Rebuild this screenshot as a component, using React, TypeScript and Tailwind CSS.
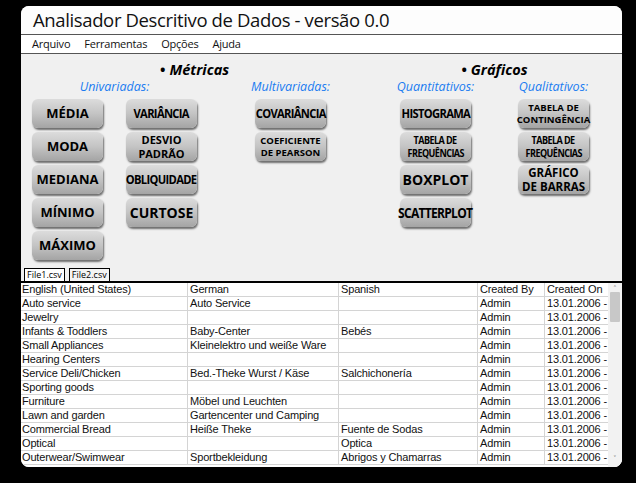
import React from 'react';

type Btn = { label: string[]; size: string; squeeze?: boolean };

const univA: Btn[] = [
  { label: ['MÉDIA'], size: 'text-[13px]' },
  { label: ['MODA'], size: 'text-[13px]' },
  { label: ['MEDIANA'], size: 'text-[13px]' },
  { label: ['MÍNIMO'], size: 'text-[13px]' },
  { label: ['MÁXIMO'], size: 'text-[13px]' },
];

const univB: Btn[] = [
  { label: ['VARIÂNCIA'], size: 'text-[13px]', squeeze: true },
  { label: ['DESVIO', 'PADRÃO'], size: 'text-[11px]' },
  { label: ['OBLIQUIDADE'], size: 'text-[13px]', squeeze: true },
  { label: ['CURTOSE'], size: 'text-[14px]' },
];

const multi: Btn[] = [
  { label: ['COVARIÂNCIA'], size: 'text-[13px]', squeeze: true },
  { label: ['COEFICIENTE', 'DE PEARSON'], size: 'text-[9.5px]' },
];

const quanti: Btn[] = [
  { label: ['HISTOGRAMA'], size: 'text-[13px]', squeeze: true },
  { label: ['TABELA DE', 'FREQUÊNCIAS'], size: 'text-[10.5px]', squeeze: true },
  { label: ['BOXPLOT'], size: 'text-[14px]' },
  { label: ['SCATTERPLOT'], size: 'text-[14px]', squeeze: true },
];

const quali: Btn[] = [
  { label: ['TABELA DE', 'CONTINGÊNCIA'], size: 'text-[9.5px]' },
  { label: ['TABELA DE', 'FREQUÊNCIAS'], size: 'text-[10.5px]', squeeze: true },
  { label: ['GRÁFICO', 'DE BARRAS'], size: 'text-[11.5px]' },
];

const rows = [
  ['Auto service', 'Auto Service', ''],
  ['Jewelry', '', ''],
  ['Infants & Toddlers', 'Baby-Center', 'Bebés'],
  ['Small Appliances', 'Kleinelektro und weiße Ware', ''],
  ['Hearing Centers', '', ''],
  ['Service Deli/Chicken', 'Bed.-Theke Wurst / Käse', 'Salchichonería'],
  ['Sporting goods', '', ''],
  ['Furniture', 'Möbel und Leuchten', ''],
  ['Lawn and garden', 'Gartencenter und Camping', ''],
  ['Commercial Bread', 'Heiße Theke', 'Fuente de Sodas'],
  ['Optical', '', 'Optica'],
  ['Outerwear/Swimwear', 'Sportbekleidung', 'Abrigos y Chamarras'],
];

function MetricButton({ b }: { b: Btn }) {
  return (
    <button className="w-[71px] h-[29px] rounded-[6px] bg-linear-to-b from-[#dcdcdc] via-[#c4c4c4] to-[#a4a4a4] shadow-[1px_2px_2px_rgba(0,0,0,0.55)] flex flex-col items-center justify-center font-['Open_Sans',sans-serif] font-bold text-black">
      {b.label.map((l) => (
        <span
          key={l}
          className={`${b.size} ${b.label.length > 1 ? 'leading-[1.2]' : 'leading-none'} whitespace-nowrap ${b.squeeze ? 'tracking-[-0.06em] scale-x-[0.86]' : ''}`}
        >
          {l}
        </span>
      ))}
    </button>
  );
}

function Column({ items }: { items: Btn[] }) {
  return (
    <div className="flex flex-col gap-[4px]">
      {items.map((b, i) => (
        <MetricButton key={i} b={b} />
      ))}
    </div>
  );
}

function SubLabel({ children }: { children: React.ReactNode }) {
  return (
    <div className="text-center text-[12.5px] italic text-[#1a7cf0] font-['Open_Sans',sans-serif] leading-none h-[17px]">
      {children}
    </div>
  );
}

export default function App() {
  return (
    <div className="w-[636px] h-[483px] bg-black pt-[6px] pl-[21px]">
      <div className="w-[601px] h-[461px] bg-[#f0f0f0] rounded-[8px] overflow-hidden flex flex-col">
        {/* título */}
        <div className="h-[29px] bg-[#fdfdfd] border-b border-[#555] flex items-center pl-[12px]">
          <span className="text-[18.5px] text-[#111] font-['Open_Sans',sans-serif] tracking-[-0.02em] leading-none">
            Analisador Descritivo de Dados - versão 0.0
          </span>
        </div>

        {/* menu */}
        <div className="h-[19px] bg-white border-b border-[#555] flex items-center gap-[14px] pl-[11px] text-[11px] text-[#111] font-['Open_Sans',sans-serif] tracking-[-0.02em]">
          <span>Arquivo</span>
          <span>Ferramentas</span>
          <span>Opções</span>
          <span>Ajuda</span>
        </div>

        {/* métricas e gráficos */}
        <div className="h-[215px] flex pt-[9px] pl-[11px]">
          <div className="flex flex-col">
            <div className="h-[18px] text-[14.5px] font-bold italic text-black font-['Open_Sans',sans-serif] leading-none pl-[128px]">
              <span className="not-italic mr-[4px]">•</span>Métricas
            </div>
            <div className="flex gap-[58px]">
              <div className="flex flex-col">
                <SubLabel>Univariadas:</SubLabel>
                <div className="flex gap-[23px] pt-[1px]">
                  <Column items={univA} />
                  <Column items={univB} />
                </div>
              </div>
              <div className="flex flex-col w-[71px]">
                <div className="-mx-[10px]">
                  <SubLabel>Multivariadas:</SubLabel>
                </div>
                <div className="pt-[1px]">
                  <Column items={multi} />
                </div>
              </div>
            </div>
          </div>

          <div className="flex flex-col ml-[74px]">
            <div className="h-[18px] text-[14.5px] font-bold italic text-black font-['Open_Sans',sans-serif] leading-none text-center">
              <span className="not-italic mr-[4px]">•</span>Gráficos
            </div>
            <div className="flex gap-[47px]">
              <div className="flex flex-col w-[71px]">
                <div className="-mx-[10px]">
                  <SubLabel>Quantitativos:</SubLabel>
                </div>
                <div className="pt-[1px]">
                  <Column items={quanti} />
                </div>
              </div>
              <div className="flex flex-col w-[71px]">
                <div className="-mx-[10px]">
                  <SubLabel>Qualitativos:</SubLabel>
                </div>
                <div className="pt-[1px]">
                  <Column items={quali} />
                </div>
              </div>
            </div>
          </div>
        </div>

        {/* abas */}
        <div className="h-[14px] flex items-end gap-[4px] pl-[3px] border-b-2 border-black">
          <div className="h-[13px] px-[2px] bg-white border border-b-0 border-black text-[9px] leading-[12px] text-black font-['Open_Sans',sans-serif]">
            File1.csv
          </div>
          <div className="h-[13px] px-[2px] bg-[#f4f4f4] border border-b-0 border-black text-[9px] leading-[12px] text-black font-['Open_Sans',sans-serif]">
            File2.csv
          </div>
        </div>

        {/* tabela */}
        <div className="flex-1 flex bg-white min-h-0 overflow-hidden">
          <div className="flex-1 font-['Liberation_Sans',Arial,sans-serif] text-[11px] text-[#111] tracking-[-0.15px]">
            <div className="grid grid-cols-[167px_151px_139px_67px_63px] h-[14px] leading-[13px] border-b border-[#d4d4d4]">
              <div className="pl-[1px] border-r border-[#d4d4d4]">English (United States)</div>
              <div className="pl-[2px] border-r border-[#d4d4d4]">German</div>
              <div className="pl-[2px] border-r border-[#d4d4d4]">Spanish</div>
              <div className="pl-[2px] border-r border-[#d4d4d4]">Created By</div>
              <div className="pl-[2px]">Created On</div>
            </div>
            {rows.map((r, i) => (
              <div
                key={i}
                className="grid grid-cols-[167px_151px_139px_67px_63px] h-[14px] leading-[13px] border-b border-[#d4d4d4]"
              >
                <div className="pl-[1px] border-r border-[#d4d4d4] whitespace-nowrap overflow-hidden">{r[0]}</div>
                <div className="pl-[2px] border-r border-[#d4d4d4] whitespace-nowrap overflow-hidden">{r[1]}</div>
                <div className="pl-[2px] border-r border-[#d4d4d4] whitespace-nowrap overflow-hidden">{r[2]}</div>
                <div className="pl-[2px] border-r border-[#d4d4d4]">Admin</div>
                <div className="pl-[2px] whitespace-nowrap overflow-hidden">13.01.2006 -</div>
              </div>
            ))}
          </div>
          {/* barra de rolagem */}
          <div className="w-[14px] bg-[#f2f2f2] flex flex-col items-center text-[8px] text-[#666] leading-none">
            <span className="h-[6px] mt-[2px]">˄</span>
            <div className="w-[10px] h-[30px] mt-[1px] bg-[#c8c8c8] rounded-[1px]" />
            <div className="flex-1" />
            <span className="mb-[4px]">˅</span>
          </div>
        </div>
      </div>
    </div>
  );
}
